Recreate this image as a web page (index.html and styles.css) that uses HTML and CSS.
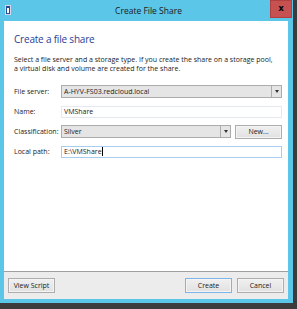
FILE: index.html
```html
<!DOCTYPE html>
<html lang="en">
<head>
  <meta charset="UTF-8">
  <meta name="viewport" content="width=device-width, initial-scale=1.0">
  <title>Create File Share</title>
  <link rel="stylesheet" href="styles.css">
</head>
<body>
  <div id="window">
    <div id="titlebar">
      <div id="appicon"><span></span></div>
      <div id="title">Create File Share</div>
      <div id="closebtn">x</div>
    </div>
    <div id="client">
      <div id="content">
        <h1 id="heading">Create a file share</h1>
        <p id="intro">Select a file server and a storage type. If you create the share on a storage pool,<br>a virtual disk and volume are created for the share.</p>

        <div class="row first">
          <span class="lbl">File server:</span>
          <div class="combo">
            <span class="value">A-HYV-FS03.redcloud.local</span>
            <span class="arrow"></span>
          </div>
        </div>

        <div class="row">
          <span class="lbl">Name:</span>
          <div class="textbox">VMShare</div>
        </div>

        <div class="row">
          <span class="lbl">Classification:</span>
          <div class="combo">
            <span class="value">Silver</span>
            <span class="arrow"></span>
          </div>
          <button class="btn newbtn">New...</button>
        </div>

        <div class="row">
          <span class="lbl">Local path:</span>
          <div class="textbox focused">E:\VMShare<span class="caret"></span></div>
        </div>
      </div>

      <div id="footer">
        <button class="btn">View Script</button>
        <div class="spacer"></div>
        <button class="btn default">Create</button>
        <button class="btn">Cancel</button>
        <div id="grip"></div>
      </div>
    </div>
  </div>
</body>
</html>
```

FILE: styles.css
```css
body {
  margin: 0;
  width: 297px;
  height: 309px;
  background-color: #3c3c3c;
  font-family: 'Open Sans', 'Noto Sans', sans-serif;
  font-size: 7px;
  color: #1a1a1a;
}
#window {
  width: 293px;
  height: 303px;
  background-color: #5cc6e9;
  display: flex;
  flex-direction: column;
}
#titlebar {
  height: 21px;
  display: flex;
  align-items: flex-start;
}
#appicon {
  width: 6px;
  height: 10px;
  margin: 5px 0 0 5px;
  background-color: #2b4a9c;
  border: 1px solid #d0d8ec;
  box-sizing: border-box;
  display: flex;
  justify-content: center;
  align-items: center;
}
#appicon span {
  width: 2px;
  height: 5px;
  background-color: #ffffff;
}
#title {
  flex: 1;
  text-align: center;
  font-size: 8.5px;
  line-height: 21px;
  padding-left: 16px;
  color: #1a1a1a;
}
#closebtn {
  width: 22px;
  height: 18px;
  margin-right: 1px;
  background-color: #c75050;
  color: #000000;
  font-weight: bold;
  font-size: 9px;
  line-height: 16px;
  text-align: center;
  box-shadow: inset 0 0 0 1px #b04040;
}
#client {
  flex: 1;
  margin: 0 5px 4px 4px;
  background-color: #ffffff;
  display: flex;
  flex-direction: column;
}
#content {
  flex: 1;
  padding: 0 6px 0 10px;
}
#heading {
  margin: 12px 0 0;
  font-size: 10px;
  font-weight: normal;
  letter-spacing: -0.2px;
  color: #2a3d93;
  line-height: 13px;
}
#intro {
  margin: 9px 0 0;
  line-height: 9px;
}
.row {
  display: flex;
  align-items: center;
  height: 13px;
  margin-top: 7px;
}
.row.first {
  margin-top: 12px;
}
.lbl {
  width: 47px;
}
.combo {
  flex: 1;
  height: 13px;
  box-sizing: border-box;
  border: 1px solid #acacac;
  background-color: #e5e5e5;
  display: flex;
  align-items: center;
}
.combo .value {
  flex: 1;
  padding-left: 2px;
}
.combo .arrow {
  width: 9px;
  height: 11px;
  border-left: 1px solid #acacac;
  display: flex;
  justify-content: center;
  align-items: center;
}
.combo .arrow::after {
  content: '';
  border-left: 2px solid transparent;
  border-right: 2px solid transparent;
  border-top: 3px solid #333333;
}
.textbox {
  flex: 1;
  height: 12px;
  box-sizing: border-box;
  border: 1px solid #e3e9ef;
  padding-left: 2px;
  line-height: 10px;
  display: flex;
  align-items: center;
}
.textbox.focused {
  border-color: #a8cdee;
}
.caret {
  width: 1px;
  height: 9px;
  background-color: #000000;
}
.btn {
  font-family: inherit;
  font-size: 7px;
  color: #1a1a1a;
  height: 15px;
  width: 47px;
  padding: 0;
  border: 1px solid #adadad;
  background: linear-gradient(#f0f0f0, #e1e1e1);
  box-shadow: inset 0 0 0 1px #f4f4f4;
}
.btn.default {
  border-color: #7fb4e8;
}
.newbtn {
  margin-left: 4px;
  height: 14px;
}
#footer {
  height: 27px;
  border-top: 1px solid #a0a0a0;
  background-color: #ececec;
  display: flex;
  align-items: center;
  gap: 5px;
  padding: 0 4px;
  position: relative;
}
.spacer {
  flex: 1;
}
#grip {
  position: absolute;
  right: 1px;
  bottom: 1px;
  width: 7px;
  height: 7px;
  background-image: radial-gradient(#b8b8b8 40%, transparent 45%);
  background-size: 2px 2px;
  clip-path: polygon(100% 0, 100% 100%, 0 100%);
}
```
